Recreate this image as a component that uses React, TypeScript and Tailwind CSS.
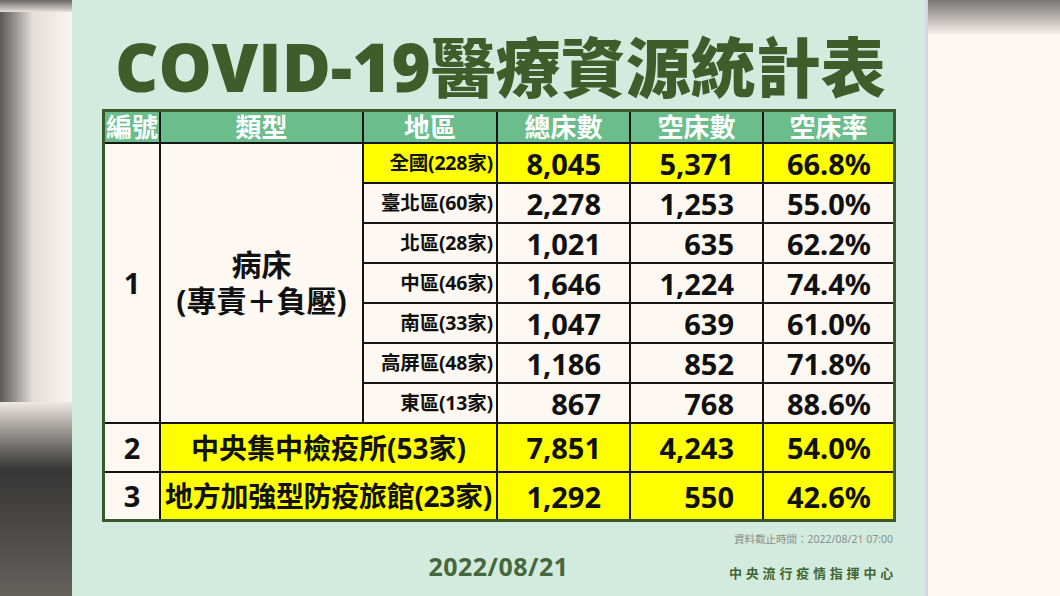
const rows = [
  { area: '全國(228家)', total: '8,045', empty: '5,371', rate: '66.8%', hl: true },
  { area: '臺北區(60家)', total: '2,278', empty: '1,253', rate: '55.0%' },
  { area: '北區(28家)', total: '1,021', empty: '635', rate: '62.2%' },
  { area: '中區(46家)', total: '1,646', empty: '1,224', rate: '74.4%' },
  { area: '南區(33家)', total: '1,047', empty: '639', rate: '61.0%' },
  { area: '高屏區(48家)', total: '1,186', empty: '852', rate: '71.8%' },
  { area: '東區(13家)', total: '867', empty: '768', rate: '88.6%' },
];

const headers = ['編號', '類型', '地區', '總床數', '空床數', '空床率'];

function NumCell({ value, hl, last }: { value: string; hl?: boolean; last?: boolean }) {
  return (
    <div
      className={`flex items-center justify-end text-[29px] leading-none ${
        last ? 'pr-[22px]' : 'pr-[28px]'
      } ${hl ? 'bg-[#ffff00]' : 'bg-[#fdf8f2]'}`}
    >
      {value}
    </div>
  );
}

function BedTable() {
  return (
    <div
      className="grid grid-cols-[54px_201px_132px_131px_131px_129px] grid-rows-[30px_repeat(7,38px)_47px_46px]
                 gap-[2px] bg-[#141414] border-[3px] border-[#3b5a2b] w-[794px]
                 font-['Noto_Sans','Noto_Sans_CJK_TC',sans-serif] font-bold text-[#111]"
    >
      {/* Header */}
      {headers.map(h => (
        <div
          key={h}
          className="bg-[#6bbd8c] flex items-center justify-center text-white text-[26px] leading-none"
        >
          {h}
        </div>
      ))}

      {/* Group 1 */}
      <div className="row-span-7 bg-[#fdf8f2] flex items-center justify-center text-[29px]">1</div>
      <div className="row-span-7 bg-[#fdf8f2] flex flex-col items-center justify-center text-[30px] leading-[36px]">
        <span>病床</span>
        <span>(專責＋負壓)</span>
      </div>
      {rows.map(r => (
        <div key={r.area} className="contents">
          <div
            className={`flex items-center justify-end pr-[3px] text-[19.5px] leading-none tracking-[-0.2px] ${
              r.hl ? 'bg-[#ffff00]' : 'bg-[#fdf8f2]'
            }`}
          >
            {r.area}
          </div>
          <NumCell value={r.total} hl={r.hl} />
          <NumCell value={r.empty} hl={r.hl} />
          <NumCell value={r.rate} hl={r.hl} last />
        </div>
      ))}

      {/* Group 2 */}
      <div className="bg-[#fdf8f2] flex items-center justify-center text-[29px]">2</div>
      <div className="col-span-2 bg-[#ffff00] flex items-center justify-center text-[28px] leading-none">
        中央集中檢疫所(53家)
      </div>
      <NumCell value="7,851" hl />
      <NumCell value="4,243" hl />
      <NumCell value="54.0%" hl last />

      {/* Group 3 */}
      <div className="bg-[#fdf8f2] flex items-center justify-center text-[29px]">3</div>
      <div className="col-span-2 bg-[#ffff00] flex items-center justify-center text-[28px] leading-none whitespace-nowrap tracking-[-0.3px]">
        地方加強型防疫旅館(23家)
      </div>
      <NumCell value="1,292" hl />
      <NumCell value="550" hl />
      <NumCell value="42.6%" hl last />
    </div>
  );
}

export default function App() {
  return (
    <div className="w-[1060px] h-[596px] flex overflow-hidden bg-[#fcf6f0]">
      {/* blurred left edge */}
      <div className="w-[72px] flex flex-col">
        <div className="h-[12px] bg-linear-to-b from-[#6a6866] to-[#e8e2dc]" />
        <div className="h-[390px] bg-linear-to-r from-[#5a5a5a] via-[#e2ddd7] via-45% to-[#fbf5ef]" />
        <div className="flex-1 bg-linear-to-b from-[#efe9e3] via-[#363636] via-35% to-[#64615d]" />
      </div>

      {/* slide */}
      <div className="w-[853px] bg-[#d3ebde] flex flex-col px-[30px]">
        <div className="h-[109px] pt-[29px] pl-[13px] leading-[70px] text-[65px] text-[#3d5e2b] whitespace-nowrap font-['Noto_Sans_CJK_TC',sans-serif] font-black">
          <span className="font-['Open_Sans','Noto_Sans',sans-serif] font-extrabold text-[67px] leading-[70px]">
            COVID-19
          </span>
          <span className="leading-[70px]">醫療資源統計表</span>
        </div>

        <BedTable />

        <div className="mt-[9px] grid grid-cols-[1fr_auto_1fr] font-['Noto_Sans','Noto_Sans_CJK_TC',sans-serif]">
          <div />
          <div className="pt-[22px] text-[25px] leading-[26px] font-bold text-[#44683b] tracking-[0.5px]">
            2022/08/21
          </div>
          <div className="flex flex-col items-end pr-[2px]">
            <span className="text-[10.5px] leading-[16px] text-[#8a8f8a]">
              資料截止時間：2022/08/21 07:00
            </span>
            <span className="mt-[18px] mr-[-4px] text-[13px] leading-[16px] font-bold text-[#3f6532] tracking-[3.8px]">
              中央流行疫情指揮中心
            </span>
          </div>
        </div>
      </div>

      {/* right blurred area */}
      <div className="flex-1 flex flex-col border-l-[3px] border-[#e2cdee]">
        <div className="h-[36px] bg-linear-to-b from-[#7a7776] to-[#fdf7f1]" />
        <div className="flex-1 bg-[#fdf7f1]" />
      </div>
    </div>
  );
}
